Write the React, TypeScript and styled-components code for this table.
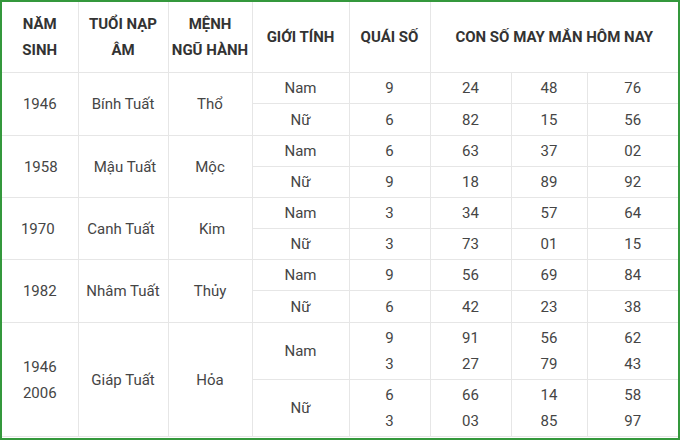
import React from 'react';
import styled, { createGlobalStyle } from 'styled-components';

interface Sub {
  gender: string;
  quai: string[];
  nums: string[][];
  height: number;
}

interface Group {
  years: string[];
  tuoi: string;
  menh: string;
  subs: Sub[];
}

const GlobalStyle = createGlobalStyle`
  html, body {
    margin: 0;
    padding: 0;
    background: #ffffff;
  }
  body {
    font-family: Roboto, "Liberation Sans", Arial, sans-serif;
  }
`;

const Frame = styled.div`
  width: 680px;
  height: 440px;
  box-sizing: border-box;
  border: 2px solid #34983c;
  background: #ffffff;
  overflow: hidden;
`;

const Table = styled.table`
  width: 676px;
  table-layout: fixed;
  border-collapse: collapse;
  color: #454545;
  font-size: 15px;
`;

const HeadCell = styled.th`
  height: 70px;
  padding: 0;
  font-weight: 700;
  color: #333333;
  line-height: 26px;
  text-align: center;
  vertical-align: middle;
  border-left: 1px solid #e6e6e6;
  border-bottom: 1px solid #e6e6e6;
  &:first-child {
    border-left: none;
  }
`;

const Cell = styled.td<{ $shift?: number }>`
  padding: 0;
  padding-left: ${(p) => (p.$shift && p.$shift > 0 ? p.$shift * 2 : 0)}px;
  padding-right: ${(p) => (p.$shift && p.$shift < 0 ? -p.$shift * 2 : 0)}px;
  text-align: center;
  vertical-align: middle;
  line-height: 26px;
  border: 1px solid #e6e6e6;
  &:first-child {
    border-left: none;
  }
`;

const EdgeCell = styled(Cell)`
  border-right: none;
`;

const groups: Group[] = [
  {
    years: ['1946'], tuoi: 'Bính Tuất', menh: 'Thổ',
    subs: [
      { gender: 'Nam', quai: ['9'], nums: [['24', '48', '76']], height: 31 },
      { gender: 'Nữ', quai: ['6'], nums: [['82', '15', '56']], height: 32 },
    ],
  },
  {
    years: ['1958'], tuoi: 'Mậu Tuất', menh: 'Mộc',
    subs: [
      { gender: 'Nam', quai: ['6'], nums: [['63', '37', '02']], height: 31 },
      { gender: 'Nữ', quai: ['9'], nums: [['18', '89', '92']], height: 31 },
    ],
  },
  {
    years: ['1970'], tuoi: 'Canh Tuất', menh: 'Kim',
    subs: [
      { gender: 'Nam', quai: ['3'], nums: [['34', '57', '64']], height: 31 },
      { gender: 'Nữ', quai: ['3'], nums: [['73', '01', '15']], height: 31 },
    ],
  },
  {
    years: ['1982'], tuoi: 'Nhâm Tuất', menh: 'Thủy',
    subs: [
      { gender: 'Nam', quai: ['9'], nums: [['56', '69', '84']], height: 31 },
      { gender: 'Nữ', quai: ['6'], nums: [['42', '23', '38']], height: 32 },
    ],
  },
  {
    years: ['1946', '2006'], tuoi: 'Giáp Tuất', menh: 'Hỏa',
    subs: [
      { gender: 'Nam', quai: ['9', '3'], nums: [['91', '56', '62'], ['27', '79', '43']], height: 57 },
      { gender: 'Nữ', quai: ['6', '3'], nums: [['66', '14', '58'], ['03', '85', '97']], height: 57 },
    ],
  },
];

// small offsets seen in the original for a few rows
const shifts: Record<string, number[]> = {
  '1970': [-2, -2, 2],
  '1958': [1, 2, 0],
};

const lines = (items: string[]) => items.map((t, i) => (
  <React.Fragment key={i}>
    {i > 0 && <br />}
    {t}
  </React.Fragment>
));

const App = () => (
  <>
    <GlobalStyle />
    <Frame>
      <Table>
        <colgroup>
          {[76, 90, 84, 97, 81, 81, 76, 91].map((w, i) => <col key={i} style={{ width: w }} />)}
        </colgroup>
        <thead>
          <tr>
            <HeadCell>NĂM<br />SINH</HeadCell>
            <HeadCell>TUỔI NẠP<br />ÂM</HeadCell>
            <HeadCell>MỆNH<br />NGŨ HÀNH</HeadCell>
            <HeadCell>GIỚI TÍNH</HeadCell>
            <HeadCell>QUÁI SỐ</HeadCell>
            <HeadCell colSpan={3}>CON SỐ MAY MẮN HÔM NAY</HeadCell>
          </tr>
        </thead>
        <tbody>
          {groups.map((g) => {
            const sh = shifts[g.years[0] + (g.years.length > 1 ? 'x' : '')] || [0, 0, 0];
            return g.subs.map((s, si) => (
              <tr key={`${g.years.join('-')}-${si}`} style={{ height: s.height }}>
                {si === 0 && (
                  <>
                    <Cell rowSpan={g.subs.length} $shift={sh[0]}>{lines(g.years)}</Cell>
                    <Cell rowSpan={g.subs.length} $shift={sh[1]}>{g.tuoi}</Cell>
                    <Cell rowSpan={g.subs.length} $shift={sh[2]}>{g.menh}</Cell>
                  </>
                )}
                <Cell>{s.gender}</Cell>
                <Cell>{lines(s.quai)}</Cell>
                <Cell>{lines(s.nums.map((r) => r[0]))}</Cell>
                <Cell>{lines(s.nums.map((r) => r[1]))}</Cell>
                <EdgeCell>{lines(s.nums.map((r) => r[2]))}</EdgeCell>
              </tr>
            ));
          })}
        </tbody>
      </Table>
    </Frame>
  </>
);

export default App;
